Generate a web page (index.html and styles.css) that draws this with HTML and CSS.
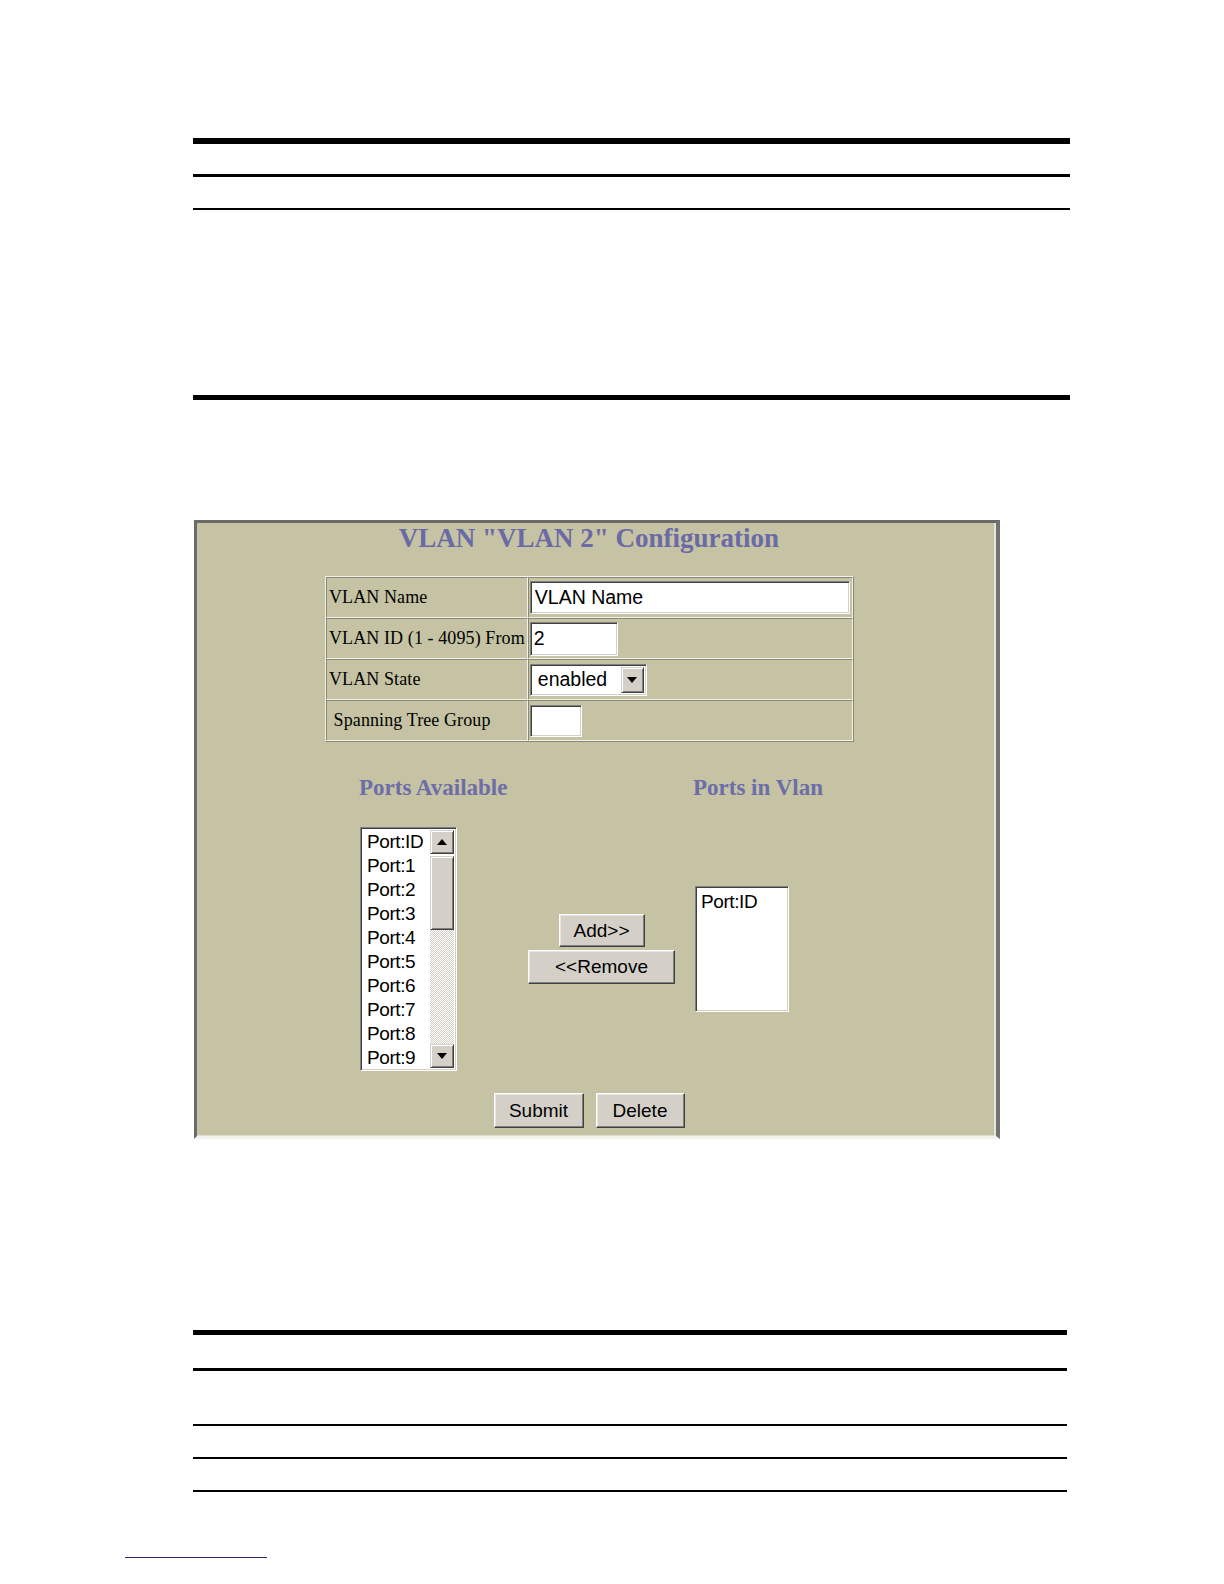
FILE: index.html
```html
<!DOCTYPE html>
<html lang="en">
<head>
<meta charset="utf-8">
<title>VLAN Configuration</title>
<link rel="stylesheet" href="styles.css">
</head>
<body>
<div class="page">
  <div class="rule r-thick"></div>
  <div class="rule r-mid gap-30"></div>
  <div class="rule r-thin gap-31"></div>
  <div class="rule r-thick gap-185"></div>

  <div class="shot">
    <h1 class="title">VLAN "VLAN 2" Configuration</h1>
    <table class="cfg">
      <tr>
        <td class="lbl">VLAN Name</td>
        <td class="val"><input class="field f-name" type="text" value="VLAN Name"></td>
      </tr>
      <tr>
        <td class="lbl">VLAN ID (1 - 4095) From</td>
        <td class="val"><input class="field f-id" type="text" value="2"></td>
      </tr>
      <tr>
        <td class="lbl">VLAN State</td>
        <td class="val">
          <div class="sel">
            <span class="sel-text">enabled</span>
            <span class="sel-btn"><svg width="10" height="6" viewBox="0 0 10 6"><polygon points="0,0 10,0 5,6" fill="#000"/></svg></span>
          </div>
        </td>
      </tr>
      <tr>
        <td class="lbl">&nbsp;Spanning Tree Group</td>
        <td class="val"><input class="field f-stg" type="text" value=""></td>
      </tr>
    </table>

    <div class="ports">
      <h2 class="ph ph-left">Ports Available</h2>
      <h2 class="ph ph-right">Ports in Vlan</h2>

      <div class="listbox list-left">
        <ul class="items">
          <li>Port:ID</li>
          <li>Port:1</li>
          <li>Port:2</li>
          <li>Port:3</li>
          <li>Port:4</li>
          <li>Port:5</li>
          <li>Port:6</li>
          <li>Port:7</li>
          <li>Port:8</li>
          <li>Port:9</li>
        </ul>
        <div class="sbar">
          <span class="sb-btn"><svg width="10" height="6" viewBox="0 0 10 6"><polygon points="5,0 10,6 0,6" fill="#000"/></svg></span>
          <span class="sb-thumb"></span>
          <span class="sb-track"></span>
          <span class="sb-btn"><svg width="10" height="6" viewBox="0 0 10 6"><polygon points="0,0 10,0 5,6" fill="#000"/></svg></span>
        </div>
      </div>

      <div class="movers">
        <button class="btn b-add" type="button">Add&gt;&gt;</button>
        <button class="btn b-remove" type="button">&lt;&lt;Remove</button>
      </div>

      <div class="listbox list-right">
        <ul class="items">
          <li>Port:ID</li>
        </ul>
      </div>
    </div>

    <div class="actions">
      <button class="btn b-submit" type="button">Submit</button>
      <button class="btn b-delete" type="button">Delete</button>
    </div>
  </div>

  <div class="rule r-thick gap-192 narrow"></div>
  <div class="rule r-mid gap-33 narrow"></div>
  <div class="rule r-thin gap-53 narrow"></div>
  <div class="rule r-thin gap-31 narrow"></div>
  <div class="rule r-thin gap-31 narrow"></div>
</div>
<div class="footnote-rule"></div>
</body>
</html>
```

FILE: styles.css
```css
html, body {
  margin: 0;
  padding: 0;
  background: #ffffff;
}

body {
  font-family: "Liberation Serif", "Times New Roman", serif;
  color: #000;
}

.page {
  width: 877px;
  margin-left: 193px;
  padding-top: 138px;
}

.rule {
  background: #000;
  width: 877px;
}
.rule.narrow { width: 874px; }
.r-thick { height: 6px; }
.r-mid { height: 3px; }
.r-thin { height: 2px; }

.gap-30 { margin-top: 30px; }
.gap-31 { margin-top: 31px; }
.gap-33 { margin-top: 33px; }
.gap-53 { margin-top: 53px; }
.gap-185 { margin-top: 185px; }
.gap-192 { margin-top: 191px; }

.r-thick.gap-185 { height: 5px; }
.r-thick.gap-192 { height: 5px; }

.footnote-rule {
  margin-top: 65px;
  margin-left: 125px;
  width: 142px;
  height: 1px;
  background: #2b2b6e;
}

/* Screenshot panel */
.shot {
  box-sizing: border-box;
  width: 806px;
  margin-top: 120px;
  margin-left: 1px;
  background: #c5c3a3;
  border-left: 3px solid #6b6b6b;
  border-top: 3px solid #6b6b6b;
  border-right: 4px solid #727272;
  border-bottom: 3px solid #f1f1ee;
  box-shadow: inset -2px 0 0 #e7e6dc, inset 0 -1px 0 #deddd3;
  padding: 0 15px 8px 0;
}

.title {
  margin: 0;
  width: 784px;
  text-align: center;
  font-family: "Liberation Serif", "Times New Roman", serif;
  font-weight: bold;
  font-size: 27px;
  line-height: 30px;
  color: #6a6aa6;
}

/* Config table */
.cfg {
  border-collapse: separate;
  border-spacing: 0;
  width: 528px;
  margin: 23px 0 0 128px;
  border: 1px solid;
  border-color: #f2f2ea #8a8872 #8a8872 #f2f2ea;
}
.cfg td {
  border: 1px solid;
  border-color: #8a8872 #f2f2ea #f2f2ea #8a8872;
  height: 39px;
  padding: 0 2px;
  vertical-align: middle;
}
.cfg td.lbl {
  width: 195px;
  font-family: "Liberation Serif", "Times New Roman", serif;
  font-size: 18px;
  white-space: nowrap;
  letter-spacing: 0.1px;
}
.cfg td.val {
  padding-left: 1px;
}

.field {
  display: block;
  box-sizing: border-box;
  margin: 0;
  padding: 0 4px;
  background: #fff;
  border: 1px solid;
  border-color: #808080 #ffffff #ffffff #808080;
  box-shadow: inset 1px 1px 0 #404040, inset -1px -1px 0 #d4d0c8;
  font-family: "Liberation Sans", Arial, sans-serif;
  font-size: 19.5px;
  color: #000;
  outline: none;
}
.f-name { width: 320px; height: 33px; }
.f-id { width: 88px; height: 34px; padding-left: 3px; }
.f-stg { width: 52px; height: 32px; }

.sel {
  box-sizing: border-box;
  width: 117px;
  height: 32px;
  display: flex;
  align-items: center;
  background: #fff;
  border: 1px solid;
  border-color: #808080 #ffffff #ffffff #808080;
  box-shadow: inset 1px 1px 0 #404040, inset -1px -1px 0 #d4d0c8;
  padding: 2px 2px 2px 7px;
}
.sel-text {
  flex: 1;
  font-family: "Liberation Sans", Arial, sans-serif;
  font-size: 19.5px;
}
.sel-btn {
  box-sizing: border-box;
  width: 23px;
  height: 26px;
  display: flex;
  align-items: center;
  justify-content: center;
  background: #d4d0c8;
  border: 1px solid;
  border-color: #d4d0c8 #404040 #404040 #d4d0c8;
  box-shadow: inset 1px 1px 0 #ffffff, inset -1px -1px 0 #808080;
}

/* Ports area */
.ports {
  display: grid;
  grid-template-columns: 151px 147px 140px;
  column-gap: 18px;
  row-gap: 27px;
  align-items: center;
  margin: 34px 0 0 162px;
}
.ph {
  margin: 0;
  font-family: "Liberation Serif", "Times New Roman", serif;
  font-weight: bold;
  font-size: 23px;
  line-height: 24px;
  color: #6d6da8;
  white-space: nowrap;
}
.ph-left { grid-column: 1; grid-row: 1; }
.ph-right { grid-column: 3; grid-row: 1; }

.listbox {
  box-sizing: border-box;
  background: #fff;
  border: 1px solid;
  border-color: #808080 #ffffff #ffffff #808080;
  box-shadow: inset 1px 1px 0 #404040, inset -1px -1px 0 #d4d0c8;
  padding: 2px;
}
.list-left {
  grid-column: 1;
  grid-row: 2;
  width: 97px;
  height: 244px;
  margin-left: 1px;
  display: flex;
}
.list-right {
  grid-column: 3;
  grid-row: 2;
  width: 94px;
  height: 126px;
  margin-left: 2px;
  padding: 3px 4px;
}

.items {
  list-style: none;
  margin: 0;
  padding: 0 0 0 4px;
  flex: 1;
  font-family: "Liberation Sans", Arial, sans-serif;
  font-size: 19px;
  line-height: 24px;
  letter-spacing: -0.4px;
  overflow: hidden;
}
.list-right .items { padding-left: 1px; }

.sbar {
  width: 24px;
  display: flex;
  flex-direction: column;
}
.sb-btn, .sb-thumb {
  box-sizing: border-box;
  display: flex;
  align-items: center;
  justify-content: center;
  background: #d4d0c8;
  border: 1px solid;
  border-color: #d4d0c8 #404040 #404040 #d4d0c8;
  box-shadow: inset 1px 1px 0 #ffffff, inset -1px -1px 0 #808080;
}
.sb-btn { height: 24px; }
.sb-thumb { height: 74px; margin-top: 2px; }
.sb-track {
  flex: 1;
  background: repeating-conic-gradient(#d4d0c8 0 25%, #ffffff 0 50%) 0 0 / 2px 2px;
}

.movers {
  grid-column: 2;
  grid-row: 2;
  display: flex;
  flex-direction: column;
  align-items: center;
  gap: 3px;
}

.btn {
  box-sizing: border-box;
  margin: 0;
  padding: 0;
  background: #d4d0c8;
  color: #000;
  font-family: "Liberation Sans", Arial, sans-serif;
  font-size: 19px;
  border: 1px solid;
  border-color: #ffffff #404040 #404040 #ffffff;
  box-shadow: inset -1px -1px 0 #808080, inset 1px 1px 0 #e8e6e0;
  cursor: default;
}
.b-add { width: 86px; height: 33px; }
.b-remove { width: 147px; height: 34px; }

.actions {
  width: 784px;
  display: flex;
  justify-content: center;
  gap: 12px;
  margin-top: 22px;
}
.b-submit { width: 90px; height: 35px; }
.b-delete { width: 89px; height: 35px; }
```
